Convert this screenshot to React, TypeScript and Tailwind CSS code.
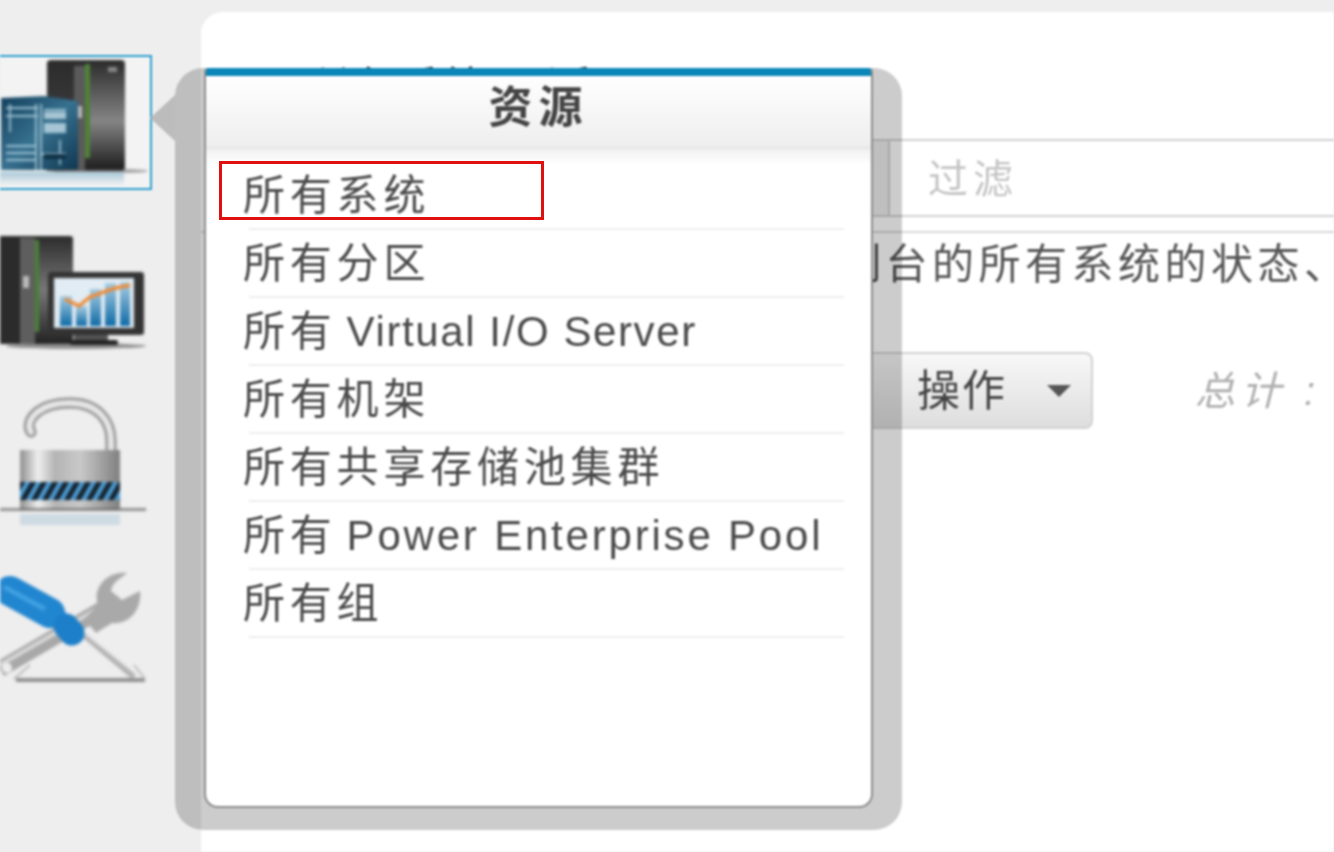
const cjk = { fontFamily: '"Liberation Sans", "Noto Sans CJK SC", sans-serif' };

function ServerIcon() {
  return (
    <svg width="150" height="131" viewBox="0 57 150 131" className="block blur-[1px]">
      <defs>
        <linearGradient id="t1" x1="0" y1="0" x2="0" y2="1">
          <stop offset="0" stopColor="#2a2a2a" />
          <stop offset="0.55" stopColor="#858585" />
          <stop offset="1" stopColor="#1a1a1a" />
        </linearGradient>
        <linearGradient id="l1" x1="0" y1="0" x2="0" y2="1">
          <stop offset="0" stopColor="#2c2c2c" />
          <stop offset="1" stopColor="#4a4a4a" />
        </linearGradient>
        <linearGradient id="b1" x1="0" y1="0" x2="1" y2="1">
          <stop offset="0" stopColor="#123f5c" />
          <stop offset="0.5" stopColor="#37718f" />
          <stop offset="1" stopColor="#0f3650" />
        </linearGradient>
        <linearGradient id="r1" x1="0" y1="0" x2="0" y2="1">
          <stop offset="0" stopColor="#a9c8d8" />
          <stop offset="1" stopColor="#f4f4f4" />
        </linearGradient>
      </defs>
      <rect x="47" y="60" width="78" height="111" rx="4" fill="url(#t1)" />
      <rect x="47" y="62" width="28" height="109" fill="url(#l1)" />
      <rect x="74" y="66" width="11" height="105" fill="#5a5a5a" />
      <rect x="85" y="64" width="5" height="94" fill="#4f8238" />
      <rect x="108" y="67" width="9" height="5" fill="#888" />
      <rect x="76" y="106" width="6" height="12" fill="#bbb" />
      <polygon points="1,98 44,96 78,101 78,170 1,170" fill="url(#b1)" />
      <g stroke="#b7d8e6" strokeWidth="1.8" opacity="0.85">
        <path d="M6 108H38M44 110H66M6 116H38M44 124H66M44 132H66M6 146H36M6 153H36M40 154H66M6 160H36" />
        <path d="M10 104V132M36 104V170M41 104V170M60 140V165" />
      </g>
      <rect x="44" y="112" width="22" height="7" fill="#cfe4ee" opacity="0.75" />
      <rect x="44" y="125" width="22" height="6" fill="#cfe4ee" opacity="0.75" />
      <rect x="44" y="154" width="22" height="5" fill="#0f2f44" />
      <ellipse cx="100" cy="171" rx="48" ry="2.5" fill="#555" opacity="0.5" />
      <rect x="0" y="172" width="124" height="14" fill="url(#r1)" />
    </svg>
  );
}

function MonitorIcon() {
  return (
    <svg width="150" height="124" viewBox="0 232 150 124" className="block blur-[1px]">
      <defs>
        <linearGradient id="t2" x1="0" y1="0" x2="0" y2="1">
          <stop offset="0" stopColor="#2c2c2c" />
          <stop offset="0.5" stopColor="#777" />
          <stop offset="1" stopColor="#222" />
        </linearGradient>
        <linearGradient id="bar" x1="0" y1="0" x2="0" y2="1">
          <stop offset="0" stopColor="#a7cde2" />
          <stop offset="1" stopColor="#0f6aa6" />
        </linearGradient>
      </defs>
      <rect x="0" y="236" width="73" height="108" rx="3" fill="url(#t2)" />
      <rect x="0" y="236" width="20" height="108" fill="#2b2b2b" />
      <rect x="20" y="238" width="15" height="106" fill="#5e5e5e" />
      <rect x="35" y="240" width="4" height="92" fill="#4b7f37" />
      <rect x="23" y="276" width="6" height="12" fill="#bbb" />
      <ellipse cx="76" cy="346" rx="70" ry="3" fill="#444" opacity="0.55" />
      <rect x="74" y="332" width="34" height="8" fill="#555" />
      <rect x="70" y="340" width="48" height="5" rx="2" fill="#222" />
      <rect x="48" y="272" width="96" height="63" rx="3" fill="#333" />
      <rect x="54" y="278" width="80" height="50" fill="#e2ecf4" />
      <rect x="60" y="296" width="12" height="30" fill="url(#bar)" />
      <rect x="76" y="306" width="11" height="20" fill="url(#bar)" />
      <rect x="90" y="289" width="11" height="37" fill="url(#bar)" />
      <rect x="105" y="283" width="11" height="43" fill="url(#bar)" />
      <rect x="120" y="282" width="10" height="44" fill="url(#bar)" />
      <path d="M65 299L79 306L90 297L112 289L130 285" stroke="#ee8a35" strokeWidth="3.5" fill="none" />
    </svg>
  );
}

function LockIcon() {
  return (
    <svg width="150" height="136" viewBox="0 394 150 136" className="block blur-[1px]">
      <defs>
        <linearGradient id="lb" x1="0" y1="0" x2="1" y2="0">
          <stop offset="0" stopColor="#8e8e8e" />
          <stop offset="0.18" stopColor="#efefef" />
          <stop offset="0.35" stopColor="#b4b4b4" />
          <stop offset="0.6" stopColor="#c9c9c9" />
          <stop offset="1" stopColor="#7f7f7f" />
        </linearGradient>
        <pattern id="st" width="11" height="18" patternUnits="userSpaceOnUse" patternTransform="skewX(-30)">
          <rect width="11" height="18" fill="#4f9fd6" />
          <rect width="6" height="18" fill="#14222e" />
        </pattern>
      </defs>
      <path d="M31 431C24 420 38 402 70 402C98 402 111 420 111 440V452" fill="none" stroke="#8f8f8f" strokeWidth="11" strokeLinecap="round" />
      <path d="M31 431C24 420 38 402 70 402C98 402 111 420 111 440V452" fill="none" stroke="#e6e6e6" strokeWidth="6" strokeLinecap="round" />
      <rect x="20" y="449" width="100" height="60" fill="url(#lb)" />
      <rect x="20" y="481" width="100" height="18" fill="url(#st)" />
      <rect x="0" y="507" width="146" height="3" fill="#666" opacity="0.7" />
      <rect x="20" y="513" width="100" height="11" fill="#b9cfdc" opacity="0.6" />
    </svg>
  );
}

function ToolsIcon() {
  return (
    <svg width="150" height="130" viewBox="0 566 150 130" className="block blur-[1px]">
      <path d="M0 668L106 606" stroke="#a8a8a8" strokeWidth="16" />
      <path d="M0 664L104 604" stroke="#d8d8d8" strokeWidth="4" />
      <path d="M127 572C106 570 92 588 98 604L84 618L96 632L112 622C128 624 142 610 140 590L122 599L111 590C112 581 120 578 127 572Z" fill="#a9a9a9" />
      <circle cx="7" cy="667" r="5" fill="#eee" />
      <path d="M84 634L134 676" stroke="#b4b4b4" strokeWidth="6" />
      <path d="M86 633L130 668" stroke="#e4e4e4" strokeWidth="2" />
      <path d="M10 590L50 612" stroke="#2186d0" strokeWidth="30" strokeLinecap="round" />
      <path d="M6 587L54 613" stroke="#3fa0e2" strokeWidth="5" strokeLinecap="round" />
      <path d="M50 604L62 620" stroke="#2186d0" strokeWidth="16" />
      <path d="M66 625L72 632" stroke="#1d7fc9" strokeWidth="25" strokeLinecap="round" />
      <path d="M16 679H145" stroke="#777" strokeWidth="4" opacity="0.8" />
      <path d="M14 678L30 664M134 664L145 678" stroke="#bbb" strokeWidth="2" />
    </svg>
  );
}

function Sidebar() {
  return (
    <div className="flex w-[201px] shrink-0 flex-col bg-[#eeeeee] pt-[55px]">
      <div className="h-[135px] w-[152px] border-y-2 border-r-2 border-[#2f9fd0] bg-[#f3f3f3]">
        <ServerIcon />
      </div>
      <div className="mt-[42px]">
        <MonitorIcon />
      </div>
      <div className="mt-[39px]">
        <LockIcon />
      </div>
      <div className="mt-[36px]">
        <ToolsIcon />
      </div>
    </div>
  );
}

function MainPanel() {
  return (
    <div className="mt-[12px] min-w-0 flex-1 overflow-hidden rounded-tl-[22px] bg-white" style={cjk}>
      <div className="ml-[102px] mt-[47px] h-[80px] whitespace-nowrap text-[46px] leading-[60px] text-[#333]">
        所有系统 最近
      </div>
      <div className="flex h-[94px] border-b-2 border-[#d8d8d8] pb-[14px]">
        <div className="ml-[640px] w-[49px] border-y-2 border-r-2 border-[#d0d0d0] bg-[#efefef]" />
        <div className="flex-1 border-y-2 border-[#d0d0d0] pl-[38px] text-[40px] leading-[76px] tracking-[5px] text-[#c4c4c4]">
          过滤
        </div>
      </div>
      <div className="ml-[80px] mt-[9px] whitespace-nowrap text-[42px] leading-[46px] tracking-[4.5px] text-[#555]">
        此页面显示由此硬件管理控制台的所有系统的状态、操作和详细信息
      </div>
      <div className="mt-[64px] flex items-center">
        <div className="ml-[620px] flex h-[77px] w-[272px] items-center justify-end rounded-[8px] border-2 border-[#d2d2d2] bg-gradient-to-b from-[#f8f8f8] to-[#dedede] pr-[20px]">
          <span className="mr-[40px] translate-y-[1px] text-[43px] tracking-[2px] text-[#444]">操作</span>
          <span className="h-0 w-0 border-x-[12px] border-t-[12px] border-x-transparent border-t-[#555]" />
        </div>
        <span className="ml-[102px] whitespace-nowrap text-[40px] italic tracking-[6px] text-[#b0b0b0]">总计 :</span>
      </div>
    </div>
  );
}

function MenuRow({ cn, en, enClass }: { cn: string; en?: string; enClass?: string }) {
  return (
    <li className="h-[68px] border-b-2 border-[#eeeeee] leading-[68px] whitespace-nowrap text-[#4a4a4a]">
      <span className="-ml-[6px] text-[42px] tracking-[4.8px]">{cn}</span>
      {en && <span className={"ml-[10px] text-[42px] " + enClass}>{en}</span>}
    </li>
  );
}

function ResourcePopover() {
  const rows = [
    { cn: "所有系统" },
    { cn: "所有分区" },
    { cn: "所有", en: "Virtual I/O Server", enClass: "tracking-[1.6px]" },
    { cn: "所有机架" },
    { cn: "所有共享存储池集群" },
    { cn: "所有", en: "Power Enterprise Pool", enClass: "tracking-[2.8px]" },
    { cn: "所有组" },
  ];

  return (
    <div className="absolute left-[175px] top-[68px] h-[762px] w-[727px] rounded-[28px] bg-black/20 pl-[29px] pr-[29px] pb-[22px]">
      {/* arrow toward the selected icon */}
      <div className="absolute -left-[25px] top-[27px] h-0 w-0 border-y-[23px] border-r-[25px] border-y-transparent border-r-[#bcbcbc]" />
      <div className="flex h-full flex-col overflow-hidden rounded-b-[14px] rounded-t-[4px] border-x-2 border-b-2 border-[#8c8c8c] bg-white" style={cjk}>
        <div className="h-[8px] bg-[#0a86b8]" />
        <div className="h-[73px] border-b-2 border-[#e6e6e6] bg-gradient-to-b from-white to-[#eeeeee] text-center text-[44px] font-bold leading-[64px] tracking-[6px] text-[#444]">
          资源
        </div>
        <div className="h-[16px] bg-gradient-to-b from-[#f1f1f1] to-white" />
        <ul className="ml-[43px] mr-[27px] mt-[-3px]">
          {rows.map((row) => (
            <MenuRow key={row.cn + (row.en ?? "")} cn={row.cn} en={row.en} enClass={row.enClass} />
          ))}
        </ul>
      </div>
    </div>
  );
}

export default function App() {
  return (
    <div className="relative h-[852px] w-[1334px] overflow-hidden bg-[#eeeeee]">
      <div className="relative h-full w-full blur-[0.8px]">
        <div className="flex h-full w-full">
          <Sidebar />
          <MainPanel />
        </div>
        <ResourcePopover />
      </div>
      <div className="absolute left-[219px] top-[161px] h-[59px] w-[325px] border-[3px] border-[#e01010]" />
    </div>
  );
}
